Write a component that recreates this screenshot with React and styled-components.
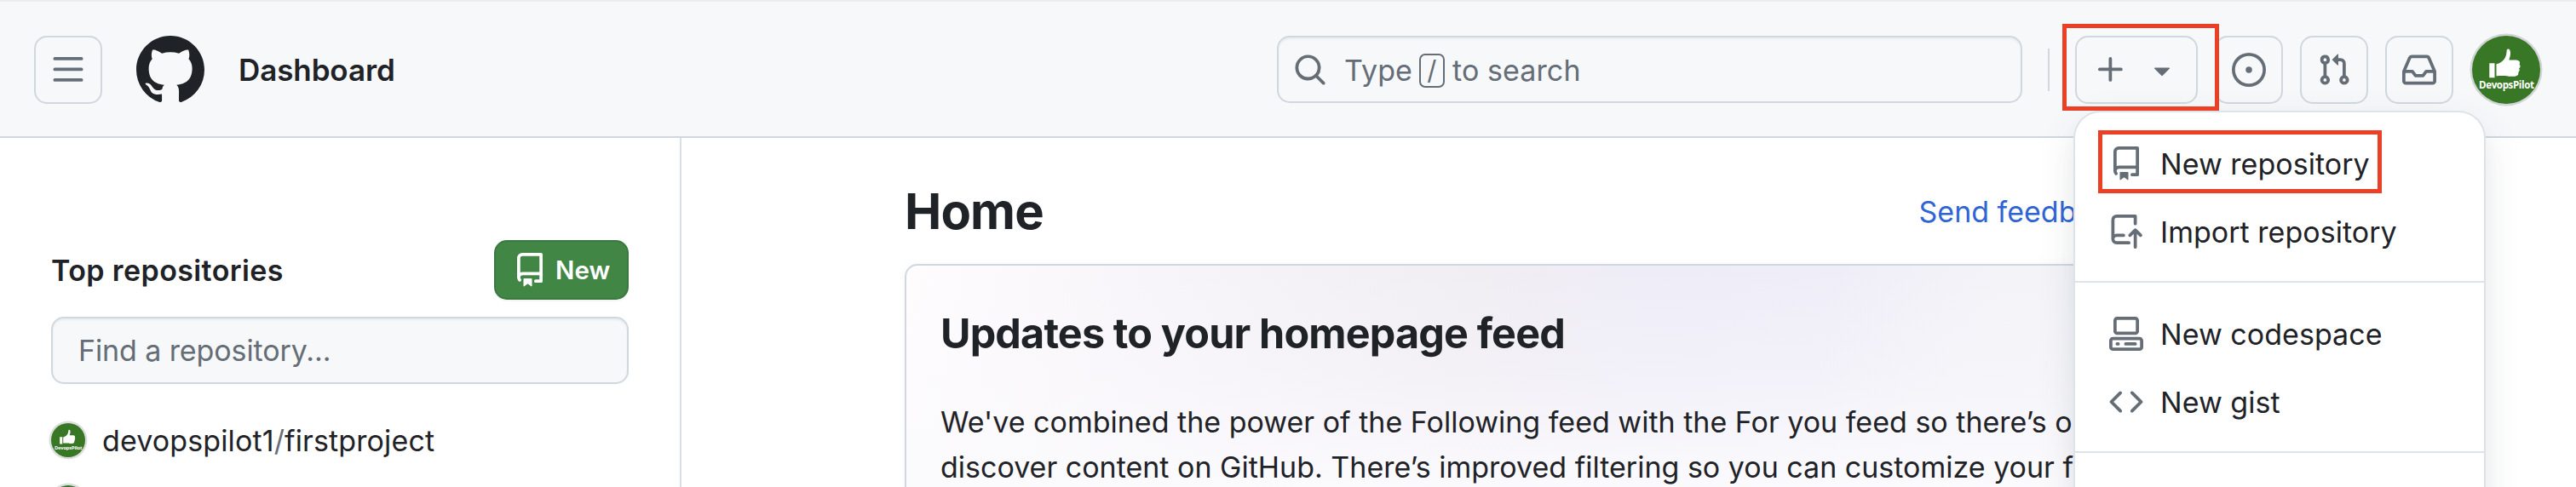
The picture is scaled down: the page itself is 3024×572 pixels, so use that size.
import React from 'react';
import styled, { createGlobalStyle } from 'styled-components';

const GlobalStyle = createGlobalStyle`
  * { box-sizing: border-box; }
  html { overflow: hidden; }
  body {
    margin: 0;
    background: #fff;
    color: #1f2328;
    font-family: Inter, "Liberation Sans", sans-serif;
    font-size: 34px;
    overflow: hidden;
  }
`;

const icons = {
  bars: 'M1 2.75A.75.75 0 0 1 1.75 2h12.5a.75.75 0 0 1 0 1.5H1.75A.75.75 0 0 1 1 2.75Zm0 5A.75.75 0 0 1 1.75 7h12.5a.75.75 0 0 1 0 1.5H1.75A.75.75 0 0 1 1 7.75ZM1.75 12h12.5a.75.75 0 0 1 0 1.5H1.75a.75.75 0 0 1 0-1.5Z',
  mark: 'M8 0c4.42 0 8 3.58 8 8a8.013 8.013 0 0 1-5.45 7.59c-.4.08-.55-.17-.55-.38 0-.27.01-1.13.01-2.2 0-.75-.25-1.23-.54-1.48 1.78-.2 3.65-.88 3.65-3.95 0-.88-.31-1.59-.82-2.15.08-.2.36-1.02-.08-2.12 0 0-.67-.22-2.2.82-.64-.18-1.32-.27-2-.27-.68 0-1.36.09-2 .27-1.53-1.03-2.2-.82-2.2-.82-.44 1.1-.16 1.92-.08 2.12-.51.56-.82 1.28-.82 2.15 0 3.06 1.86 3.75 3.64 3.95-.23.2-.44.55-.51 1.07-.46.21-1.61.55-2.33-.66-.15-.24-.6-.83-1.23-.82-.67.01-.27.38.01.53.34.19.73.9.82 1.13.16.45.68 1.31 2.69.94 0 .67.01 1.3.01 1.49 0 .21-.15.45-.55.38A7.995 7.995 0 0 1 0 8c0-4.42 3.58-8 8-8Z',
  search: 'M10.68 11.74a6 6 0 0 1-7.922-8.982 6 6 0 0 1 8.982 7.922l3.04 3.04a.749.749 0 0 1-.326 1.275.749.749 0 0 1-.734-.215ZM11.5 7a4.499 4.499 0 1 0-8.997 0A4.499 4.499 0 0 0 11.5 7Z',
  plus: 'M7.75 2a.75.75 0 0 1 .75.75V7h4.25a.75.75 0 0 1 0 1.5H8.5v4.25a.75.75 0 0 1-1.5 0V8.5H2.75a.75.75 0 0 1 0-1.5H7V2.75A.75.75 0 0 1 7.75 2Z',
  caret: 'm4.427 7.427 3.396 3.396a.25.25 0 0 0 .354 0l3.396-3.396A.25.25 0 0 0 11.396 7H4.604a.25.25 0 0 0-.177.427Z',
  issue: 'M8 9.5a1.5 1.5 0 1 0 0-3 1.5 1.5 0 0 0 0 3ZM8 0a8 8 0 1 1 0 16A8 8 0 0 1 8 0ZM1.5 8a6.5 6.5 0 1 0 13 0 6.5 6.5 0 0 0-13 0Z',
  pull: 'M1.5 3.25a2.25 2.25 0 1 1 3 2.122v5.256a2.251 2.251 0 1 1-1.5 0V5.372A2.25 2.25 0 0 1 1.5 3.25Zm5.677-.177L9.573.677A.25.25 0 0 1 10 .854V2.5h1A2.5 2.5 0 0 1 13.5 5v5.628a2.251 2.251 0 1 1-1.5 0V5a1 1 0 0 0-1-1h-1v1.646a.25.25 0 0 1-.427.177L7.177 3.427a.25.25 0 0 1 0-.354ZM3.75 2.5a.75.75 0 1 0 0 1.5.75.75 0 0 0 0-1.5Zm0 9.5a.75.75 0 1 0 0 1.5.75.75 0 0 0 0-1.5Zm8.25.75a.75.75 0 1 0 1.5 0 .75.75 0 0 0-1.5 0Z',
  inbox: 'M2.8 2.06A1.75 1.75 0 0 1 4.41 1h7.18c.7 0 1.333.417 1.61 1.06l2.74 6.395c.04.093.06.194.06.295v4.5A1.75 1.75 0 0 1 14.25 15H1.75A1.75 1.75 0 0 1 0 13.25v-4.5c0-.101.02-.202.06-.295Zm1.61.44a.25.25 0 0 0-.23.152L1.887 8H4.75a.75.75 0 0 1 .6.3L6.625 10h2.75l1.275-1.7a.75.75 0 0 1 .6-.3h2.863L11.82 2.652a.25.25 0 0 0-.23-.152Zm10.09 7h-2.875l-1.275 1.7a.75.75 0 0 1-.6.3h-3.5a.75.75 0 0 1-.6-.3L4.375 9.5H1.5v3.75c0 .138.112.25.25.25h12.5a.25.25 0 0 0 .25-.25Z',
  repo: 'M2 2.5A2.5 2.5 0 0 1 4.5 0h8.75a.75.75 0 0 1 .75.75v12.5a.75.75 0 0 1-.75.75h-2.5a.75.75 0 0 1 0-1.5h1.75v-2h-8a1 1 0 0 0-.714 1.7.75.75 0 1 1-1.072 1.05A2.495 2.495 0 0 1 2 11.5Zm10.5-1h-8a1 1 0 0 0-1 1v6.708A2.486 2.486 0 0 1 4.5 9h8ZM5 12.25a.25.25 0 0 1 .25-.25h3.5a.25.25 0 0 1 .25.25v3.25a.25.25 0 0 1-.4.2l-1.45-1.087a.249.249 0 0 0-.3 0L5.4 15.7a.25.25 0 0 1-.4-.2Z',
  repoPush: 'M1 2.5A2.5 2.5 0 0 1 3.5 0h8.75a.75.75 0 0 1 .75.75v3.5a.75.75 0 0 1-1.5 0V1.5h-8a1 1 0 0 0-1 1v6.708A2.493 2.493 0 0 1 3.5 9h3.25a.75.75 0 0 1 0 1.5H3.5a1 1 0 0 0 0 2h5.75a.75.75 0 0 1 0 1.5H3.5A2.5 2.5 0 0 1 1 11.5Zm13.23 7.79h-.001l-1.224-1.224v6.184a.75.75 0 0 1-1.5 0V9.066L10.28 10.29a.75.75 0 0 1-1.06-1.061l2.505-2.504a.75.75 0 0 1 1.06 0L15.29 9.23a.751.751 0 0 1-.018 1.042.751.751 0 0 1-1.042.018Z',
  codespaces: 'M0 11.25c0-.966.784-1.75 1.75-1.75h12.5c.966 0 1.75.784 1.75 1.75v3A1.75 1.75 0 0 1 14.25 16H1.75A1.75 1.75 0 0 1 0 14.25Zm2-9.5C2 .784 2.784 0 3.75 0h8.5C13.216 0 14 .784 14 1.75v5a1.75 1.75 0 0 1-1.75 1.75h-8.5A1.75 1.75 0 0 1 2 6.75Zm1.75-.25a.25.25 0 0 0-.25.25v5c0 .138.112.25.25.25h8.5a.25.25 0 0 0 .25-.25v-5a.25.25 0 0 0-.25-.25Zm-2 9.5a.25.25 0 0 0-.25.25v3c0 .138.112.25.25.25h12.5a.25.25 0 0 0 .25-.25v-3a.25.25 0 0 0-.25-.25ZM7 12.75a.75.75 0 0 1 .75-.75h4.5a.75.75 0 0 1 0 1.5h-4.5a.75.75 0 0 1-.75-.75Zm-4 0a.75.75 0 0 1 .75-.75h.5a.75.75 0 0 1 0 1.5h-.5a.75.75 0 0 1-.75-.75Z',
  code: 'm11.28 3.22 4.25 4.25a.75.75 0 0 1 0 1.06l-4.25 4.25a.749.749 0 0 1-1.275-.326.749.749 0 0 1 .215-.734L13.94 8l-3.72-3.72a.749.749 0 0 1 .326-1.275.749.749 0 0 1 .734.215Zm-6.56 0a.751.751 0 0 1 1.042.018.751.751 0 0 1 .018 1.042L2.06 8l3.72 3.72a.749.749 0 0 1-.326 1.275.749.749 0 0 1-.734-.215L.47 8.53a.75.75 0 0 1 0-1.06Z',
};

const Svg = styled.svg`
  display: block;
  flex: none;
  width: ${(p) => p.$size}px;
  height: ${(p) => p.$size}px;
  fill: ${(p) => p.$color};
`;

const Icon = ({ name, size = 40, color = '#656d76' }) => (
  <Svg viewBox="0 0 16 16" $size={size} $color={color} aria-hidden="true">
    <path d={icons[name]} />
  </Svg>
);

const Page = styled.div`
  position: relative;
  display: flex;
  flex-direction: column;
  width: 3024px;
  height: 572px;
  overflow: hidden;
`;

const Header = styled.header`
  flex: none;
  display: flex;
  align-items: center;
  height: 162px;
  padding: 2px 42px 0 40px;
  background: #f6f8fa;
  border-top: 2px solid #ebedef;
  border-bottom: 2px solid #d0d7de;
`;

const SquareButton = styled.button`
  flex: none;
  display: flex;
  align-items: center;
  justify-content: center;
  width: 80px;
  height: 80px;
  padding: 0;
  background: transparent;
  border: 2px solid #d0d7de;
  border-radius: 15px;
`;

const CreateButton = styled(SquareButton)`
  width: 144px;
  gap: 20px;
`;

const HomeLink = styled.a`
  margin: 0 40px;
`;

const Context = styled.div`
  flex: 1;
  font-size: 35px;
  font-weight: 600;
  letter-spacing: -0.1px;
`;

const SearchBox = styled.div`
  display: flex;
  align-items: center;
  width: 875px;
  height: 79px;
  margin-bottom: 1px;
  padding: 0 17px;
  color: #656d76;
  border: 2px solid #d0d7de;
  border-radius: 15px;
  box-shadow: inset 0 2px 2px rgba(208, 215, 222, 0.35);
`;

const SearchText = styled.span`
  display: flex;
  align-items: center;
  margin-left: 20px;
  padding-top: 2px;
  letter-spacing: 0.1px;
`;

const Slash = styled.kbd`
  display: flex;
  align-items: center;
  justify-content: center;
  width: 30px;
  height: 40px;
  margin: 0 9px 0 8px;
  font: 31px Inter, sans-serif;
  border: 2px solid #656d76;
  border-radius: 7px;
`;

const Separator = styled.span`
  width: 2px;
  height: 50px;
  margin: 0 30px;
  background: #d0d7de;
`;

const Actions = styled.div`
  display: flex;
  align-items: center;
  gap: 20px;
`;

const AvatarSvg = styled.svg`
  display: block;
  flex: none;
  width: ${(p) => p.$size}px;
  height: ${(p) => p.$size}px;
  margin-left: ${(p) => p.$shift || 0}px;
  border-radius: 50%;
  background: #387725;
  box-shadow: 0 0 0 2.5px ${(p) => p.$ring};

  text {
    font: 700 11.6px "Open Sans", "Noto Sans", sans-serif;
  }
`;

const Avatar = ({ size, shift, ring = '#dcdddd', label = true }) => (
  <AvatarSvg viewBox="0 0 80 80" $size={size} $shift={shift} $ring={ring} fill="#fff">
    <path d="M20.3 32.3h6.2v16.9h-6.2z" />
    <path d="M28.5 33.2c5.5-1.2 9.5-4.7 11.3-10 .8-2.6.6-4.800 1-6.500.5-1.600 3-1.500 3.700.5.9 2.600.7 5.500-.4 8.700-.4 1.200-.6 1.800-.5 2.700 3.500.1 7-.4 10.400.3 2.200.7 2.600 3.300 1.500 4.500 1.700 1.500 1.200 4-.4 4.900 1.200 1.600.6 3.800-.9 4.600.7 1.700-.3 3.500-2 4-1.700 1-4.200 1-6.500.9-3.600-.2-6-.9-9-.9-2.700 0-5.200.1-8.200.3Z" />
    {label && <text x="40.500" y="62" textAnchor="middle" textLength="65">DevopsPilot</text>}
  </AvatarSvg>
);

const Body = styled.div`
  flex: 1;
  display: flex;
  min-height: 0;
`;

const Sidebar = styled.aside`
  flex: none;
  width: 800px;
  padding: 120px 60px 0;
  border-right: 2px solid #d8dee4;
`;

const SidebarHead = styled.div`
  display: flex;
  align-items: center;
  justify-content: space-between;
  height: 70px;
  margin-bottom: 20px;
`;

const SidebarTitle = styled.h2`
  margin: 0;
  font-size: 34px;
  font-weight: 600;
  letter-spacing: 0.4px;
`;

const NewButton = styled.button`
  display: flex;
  align-items: center;
  gap: 10px;
  width: 158px;
  height: 70px;
  padding: 0 20px;
  color: #fff;
  font: 600 29.5px Inter, sans-serif;
  background: #428646;
  border: 2px solid #3b783f;
  border-radius: 15px;
  box-shadow: 0 2px 0 rgba(31, 35, 40, 0.05);
`;

const FilterInput = styled.div`
  display: flex;
  align-items: center;
  height: 79px;
  padding: 0 30px;
  color: #656d76;
  background: #f6f8fa;
  border: 2px solid #d0d7de;
  border-radius: 15px;
  box-shadow: inset 0 2px 2px rgba(208, 215, 222, 0.35);
  letter-spacing: -0.1px;
`;

const RepoList = styled.div`
  display: flex;
  flex-direction: column;
  gap: 33px;
  margin-top: 46px;
`;

const RepoRow = styled.div`
  display: flex;
  align-items: center;
  gap: 20px;
  height: 40px;
  letter-spacing: 0.12px;
`;

const Muted = styled.span`
  color: #656d76;
`;

const Main = styled.main`
  flex: none;
  display: flex;
  flex-direction: column;
  width: 1800px;
  padding: 51px 0 0 262px;
`;

const MainHead = styled.div`
  display: flex;
  align-items: center;
  justify-content: space-between;
  height: 72px;
  margin-bottom: 27px;
  padding-right: 105px;
`;

const PageTitle = styled.h1`
  margin: 0;
  font-size: 58px;
  font-weight: 650;
  letter-spacing: -0.9px;
`;

const FeedbackLink = styled.a`
  color: #2f64d4;
`;

const Card = styled.section`
  flex: none;
  height: 420px;
  padding: 50px 40px 0;
  border: 2px solid #d0d7de;
  border-radius: 15px;
  background:
    linear-gradient(to bottom, rgba(251, 250, 253, 0) 0%, rgba(251, 250, 253, 0.3) 30%, rgba(251, 250, 253, 0.95) 62%, #fff 100%),
    linear-gradient(100deg, #fefcfd 0%, #f7f5f9 18%, #f0edf3 42%, #eeecf7 56%, #efeef8 68%, #f3f3f8 80%, #f3f5f9 100%);
  box-shadow: 0 0 8px rgba(140, 149, 159, 0.08);
`;

const CardTitle = styled.h3`
  height: 60px;
  margin: 0 0 48px;
  font-size: 48.5px;
  font-weight: 650;
  line-height: 60px;
  letter-spacing: -0.85px;
`;

const CardText = styled.p`
  margin: 0;
  line-height: 52.5px;
  white-space: nowrap;
`;

const Menu = styled.nav`
  position: absolute;
  top: 132px;
  left: 2436px;
  width: 480px;
  height: 620px;
  padding: 20px 0;
  background: #fff;
  border-radius: 30px;
  box-shadow:
    0 0 0 2px #dee3e9,
    0 15px 30px -7.5px rgba(66, 74, 83, 0.05),
    0 15px 45px rgba(66, 74, 83, 0.13);
`;

const MenuItem = styled.div`
  display: flex;
  align-items: center;
  gap: 20px;
  height: 80px;
  padding-left: 40px;
  letter-spacing: 0.03px;
`;

const MenuDivider = styled.hr`
  height: 2px;
  margin: 18px 0 20px;
  border: 0;
  background: #dee3e9;
`;

const Highlight = styled.span`
  position: absolute;
  top: ${(p) => p.$top}px;
  left: ${(p) => p.$left}px;
  width: ${(p) => p.$width}px;
  height: ${(p) => p.$height}px;
  border: 5px solid #eb4025;
  z-index: 2;
`;

export default function App() {
  return (
    <>
      <GlobalStyle />
      <Page>
        <Header>
          <SquareButton aria-label="Menu"><Icon name="bars" /></SquareButton>
          <HomeLink><Icon name="mark" size={80} color="#1f2328" /></HomeLink>
          <Context>Dashboard</Context>
          <SearchBox>
            <Icon name="search" />
            <SearchText>
              Type<Slash>/</Slash>to search
            </SearchText>
          </SearchBox>
          <Separator />
          <Actions>
            <CreateButton aria-label="Create new">
              <Icon name="plus" />
              <Icon name="caret" />
            </CreateButton>
            <SquareButton aria-label="Issues"><Icon name="issue" /></SquareButton>
            <SquareButton aria-label="Pull requests"><Icon name="pull" /></SquareButton>
            <SquareButton aria-label="Inbox"><Icon name="inbox" /></SquareButton>
            <Avatar size={80} shift={2} ring="#d3d4d8" />
          </Actions>
        </Header>
        <Body>
          <Sidebar>
            <SidebarHead>
              <SidebarTitle>Top repositories</SidebarTitle>
              <NewButton><Icon name="repo" color="#fff" />New</NewButton>
            </SidebarHead>
            <FilterInput>Find a repository...</FilterInput>
            <RepoList>
              <RepoRow>
                <Avatar size={40} />
                <span>devopspilot1<Muted>/</Muted>firstproject</span>
              </RepoRow>
              <RepoRow>
                <Avatar size={40} label={false} />
              </RepoRow>
            </RepoList>
          </Sidebar>
          <Main>
            <MainHead>
              <PageTitle>Home</PageTitle>
              <FeedbackLink>Send feedback</FeedbackLink>
            </MainHead>
            <Card>
              <CardTitle>Updates to your homepage feed</CardTitle>
              <CardText>
                We've combined the power of the Following feed with the For you feed so there’s one
                <br />
                discover content on GitHub. There’s improved filtering so you can customize your feed
              </CardText>
            </Card>
          </Main>
        </Body>
        <Menu>
          <MenuItem><Icon name="repo" />New repository</MenuItem>
          <MenuItem><Icon name="repoPush" />Import repository</MenuItem>
          <MenuDivider />
          <MenuItem><Icon name="codespaces" />New codespace</MenuItem>
          <MenuItem><Icon name="code" />New gist</MenuItem>
          <MenuDivider />
        </Menu>
        <Highlight $top={28} $left={2421} $width={184} $height={102} />
        <Highlight $top={153} $left={2463} $width={333} $height={74} />
      </Page>
    </>
  );
}
